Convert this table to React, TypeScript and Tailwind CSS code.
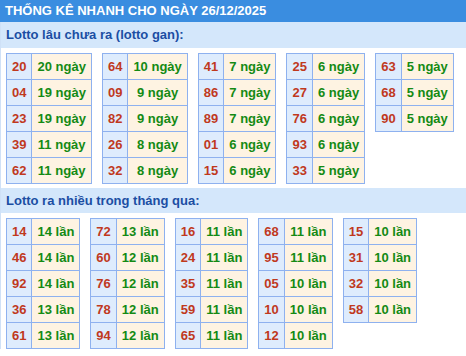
import React from "react";

type Row = [string, string];

const gan: Row[][] = [
  [["20", "20"], ["04", "19"], ["23", "19"], ["39", "11"], ["62", "11"]],
  [["64", "10"], ["09", "9"], ["82", "9"], ["26", "8"], ["32", "8"]],
  [["41", "7"], ["86", "7"], ["89", "7"], ["01", "6"], ["15", "6"]],
  [["25", "6"], ["27", "6"], ["76", "6"], ["93", "6"], ["33", "5"]],
  [["63", "5"], ["68", "5"], ["90", "5"]],
];

const nhieu: Row[][] = [
  [["14", "14"], ["46", "14"], ["92", "14"], ["36", "13"], ["61", "13"]],
  [["72", "13"], ["60", "12"], ["76", "12"], ["78", "12"], ["94", "12"]],
  [["16", "11"], ["24", "11"], ["35", "11"], ["59", "11"], ["65", "11"]],
  [["68", "11"], ["95", "11"], ["05", "10"], ["10", "10"], ["12", "10"]],
  [["15", "10"], ["31", "10"], ["32", "10"], ["58", "10"]],
];

function Table({ rows, unit }: { rows: Row[]; unit: string }) {
  return (
    <table className="border-collapse">
      <tbody>
        {rows.map(([n, v], i) => (
          <tr key={i} className="h-[26px]">
            <td className="border border-[#8eb1ef] bg-[#deecfd] px-[5px] text-center text-[13px] font-bold text-[#c0391d] leading-none">
              {n}
            </td>
            <td className="border border-[#8eb1ef] bg-[#fef3e2] px-[5px] text-center text-[13px] font-bold text-[#148a14] leading-none whitespace-nowrap">
              {v} {unit}
            </td>
          </tr>
        ))}
      </tbody>
    </table>
  );
}

export default function App() {
  return (
    <div
      className="w-[466px] h-[356px] bg-white overflow-hidden"
      style={{ fontFamily: '"Liberation Sans", Arial, sans-serif' }}
    >
      <div className="h-[22px] bg-[#3a8de0] pl-[5px] flex items-center text-white text-[13px] font-bold">
        THỐNG KÊ NHANH CHO NGÀY 26/12/2025
      </div>
      <div className="border-l border-[#cfe1f7]">
        <div className="h-[26px] bg-[#d4e7fb] pl-[5px] flex items-center text-[#1b4ea3] text-[13px] font-bold">
          Lotto lâu chưa ra (lotto gan):
        </div>
        <div className="flex items-start gap-[10px] pl-[5px] pt-[5px] pb-[4px]">
          {gan.map((t, i) => (
            <Table key={i} rows={t} unit="ngày" />
          ))}
        </div>
        <div className="h-[25px] bg-[#d4e7fb] pl-[5px] flex items-center text-[#1b4ea3] text-[13px] font-bold">
          Lotto ra nhiều trong tháng qua:
        </div>
        <div className="flex items-start gap-[10px] pl-[5px] pt-[5px]">
          {nhieu.map((t, i) => (
            <Table key={i} rows={t} unit="lần" />
          ))}
        </div>
      </div>
    </div>
  );
}
